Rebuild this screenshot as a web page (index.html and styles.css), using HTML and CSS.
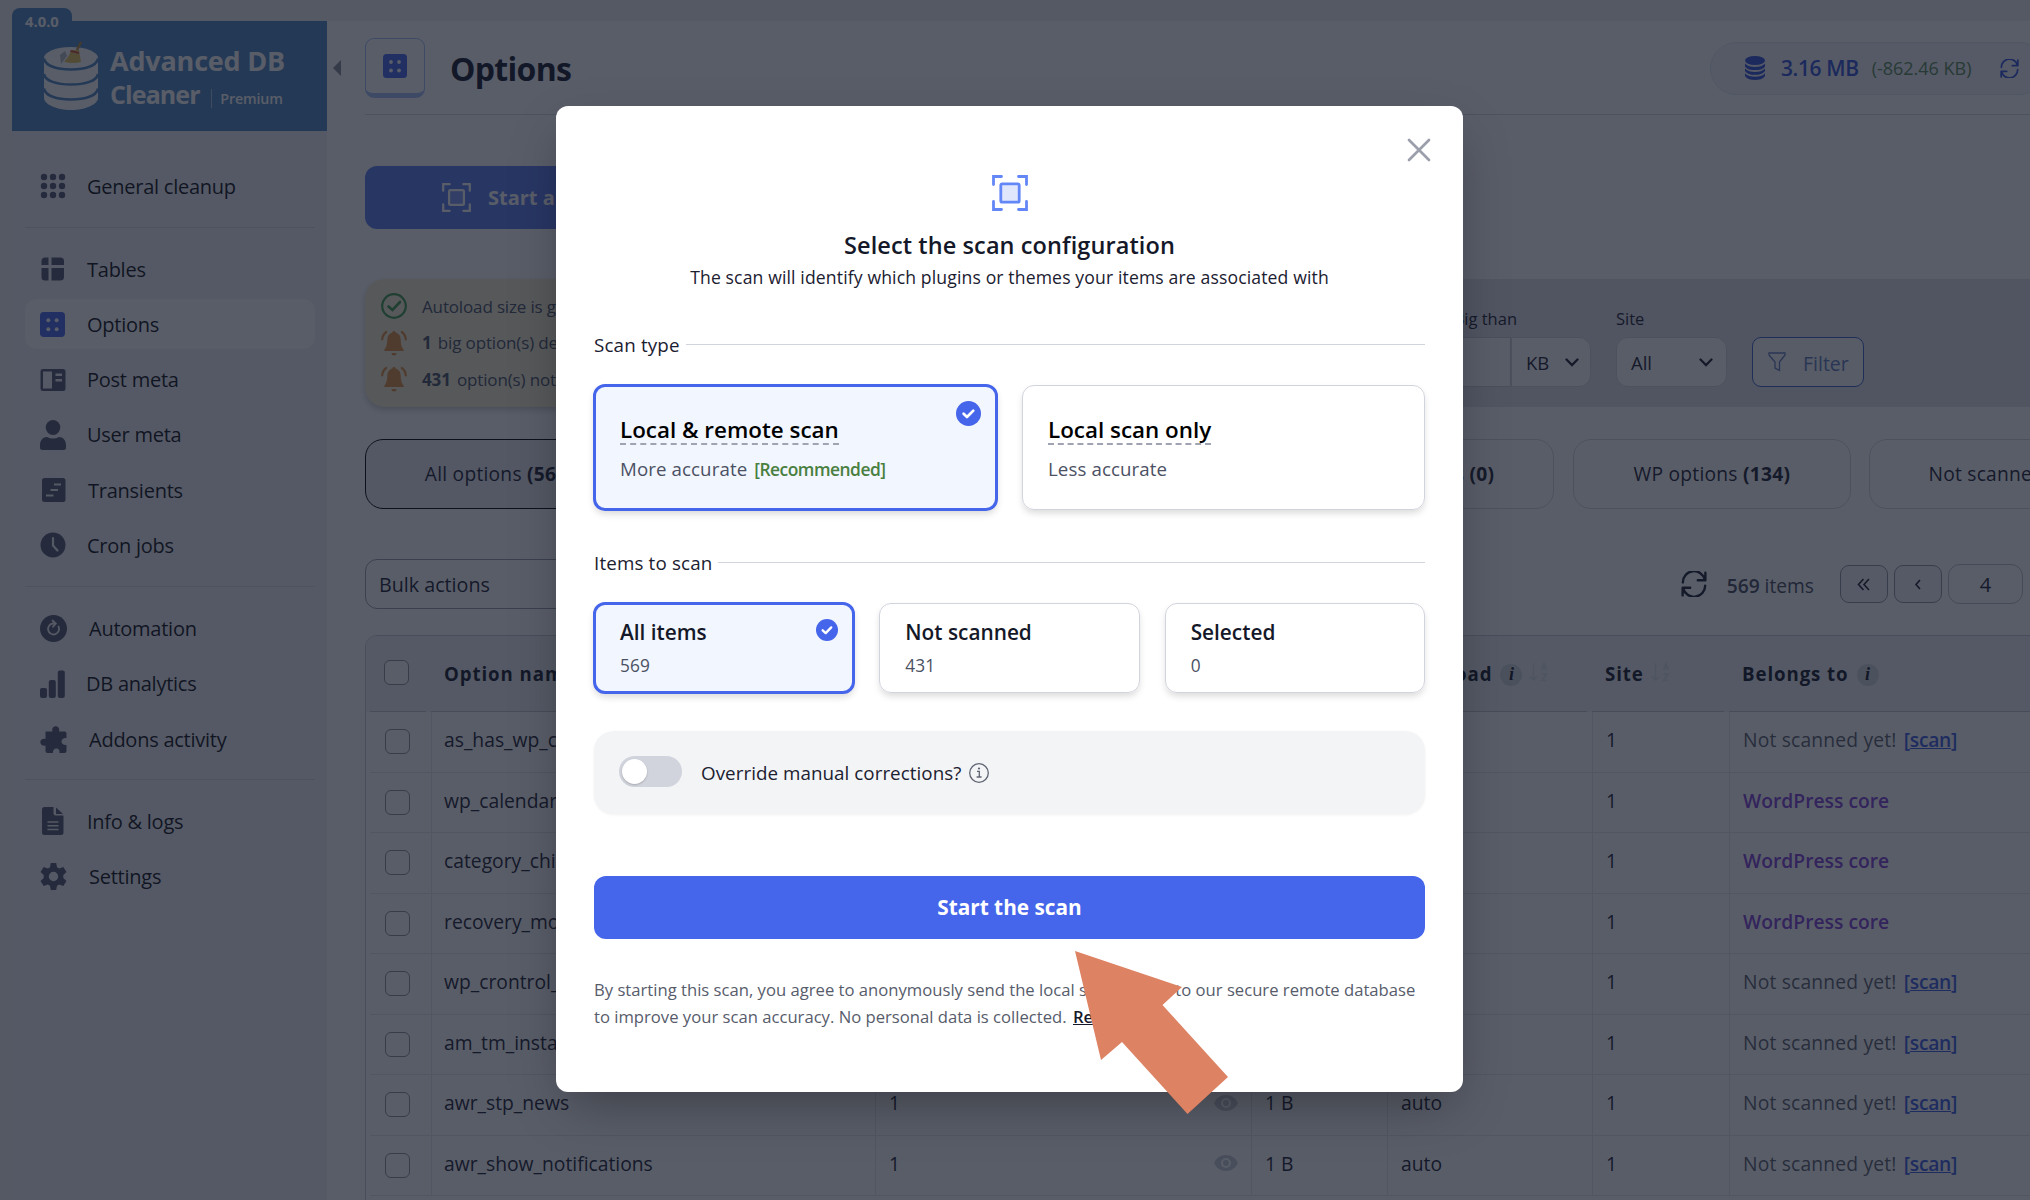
FILE: index.html
```html
<!DOCTYPE html>
<html lang="en">
<head>
	<meta charset="UTF-8">
	<title>Advanced DB Cleaner</title>
	<link rel="stylesheet" href="styles.css">
</head>
<body>
	<!-- icons used more than once -->
	<svg class="defs" width="0" height="0">
		<symbol id="i-scan" viewBox="0 0 36 36">
			<path d="M1.5 9.5V1.5H9.5M26.500 1.500H34.500V9.500M34.500 26.500V34.500H26.500M9.500 34.500H1.500V26.500" fill="none" stroke="currentColor" stroke-width="2.8" stroke-linecap="round"/>
			<rect x="8.800" y="8.800" width="18.400" height="18.400" rx="1.500" fill="currentColor" fill-opacity=".2" stroke="currentColor" stroke-width="2.800"/>
		</symbol>
		<symbol id="i-options" viewBox="0 0 24 24">
			<rect width="24" height="24" rx="3.500" fill="#4565ea"/>
			<g fill="#fff"><circle cx="8" cy="8" r="1.900"/><circle cx="16" cy="8" r="1.900"/><circle cx="8" cy="16.500" r="1.900"/><circle cx="16" cy="16.500" r="1.900"/></g>
		</symbol>
		<symbol id="i-refresh" viewBox="0 0 24 24">
			<path d="M22.500 1.500V8.500H15.500M22 8A10.300 10.300 0 0 0 1.700 10.500M1.500 22.500V15.500H8.500M2 16A10.300 10.300 0 0 0 22.300 13.500" fill="none" stroke="currentColor" stroke-width="2.200" stroke-linecap="round" stroke-linejoin="round"/>
		</symbol>
		<symbol id="i-bell" viewBox="0 0 26 26">
			<path d="M13 1c-1 0-1.700.7-1.700 1.600C8.200 3.400 6.300 6 6.300 9.500c0 5-1.200 8.200-3 10.300V21h19.400v-1.200c-1.800-2.100-3-5.300-3-10.300 0-3.500-1.900-6.100-5-6.900C14.700 1.700 14 1 13 1zM10.500 23h5a2.500 2.500 0 0 1-5 0z" fill="currentColor"/>
			<path d="M5.200 2C2.800 3.800 1.400 6.300 1.200 9.500M20.800 2c2.400 1.800 3.800 4.300 4 7.500" fill="none" stroke="currentColor" stroke-width="2.200" stroke-linecap="round"/>
		</symbol>
		<symbol id="i-chevron" viewBox="0 0 14 9"><path d="M1.500 1.500L7 7L12.500 1.500" fill="none" stroke="currentColor" stroke-width="2.300" stroke-linecap="round"/></symbol>
		<symbol id="i-check" viewBox="0 0 25 25">
			<circle cx="12.500" cy="12.500" r="12.500" fill="#4565ea"/>
			<path d="M7.600 12.800L11 16L17.300 9.600" fill="none" stroke="#fff" stroke-width="2.700" stroke-linecap="round" stroke-linejoin="round"/>
		</symbol>
		<symbol id="i-eye" viewBox="0 0 24 16">
			<path d="M12 0C6.500 0 2.200 3.200 0 8c2.200 4.800 6.500 8 12 8s9.800-3.200 12-8C21.800 3.200 17.500 0 12 0zm0 13a5 5 0 1 1 0-10 5 5 0 0 1 0 10z" fill="currentColor"/><circle cx="12" cy="8" r="3" fill="currentColor"/>
		</symbol>
		<symbol id="i-sort" viewBox="0 0 20 20">
			<path d="M4.500 1V18M1 14.500L4.500 18L8 14.500M12.500 8L15 1.500L17.500 8M13.300 6H16.700M12.500 12H17.500L12.500 18.500H17.500" fill="none" stroke="currentColor" stroke-width="1.600"/>
		</symbol>
	</svg>

	<div class="page">
		<div class="sidebar">
			<span class="version">4.0.0</span>
			<div class="logo">
				<svg width="56" height="70" viewBox="0 0 56 70">
					<path d="M1 17V57C1 63 13 69 28 69S55 63 55 57V17z" fill="#fff"/>
					<ellipse cx="28" cy="17" rx="27" ry="11" fill="#fff"/>
					<path d="M1 17.500C2 25 14 28.500 28 28.500S54 25 55 17.500M1 33C2 40 14 43.500 28 43.500S54 40 55 33M1 47.500C2 55 14 58.500 28 58.500S54 55 55 47.500" fill="none" stroke="#4e86be" stroke-width="2.600"/>
					<path d="M17 14l5-4 2 5-6 8z" fill="#b9bcc2"/>
					<path d="M38 1L34 9" stroke="#b98a3a" stroke-width="2.400"/>
					<path d="M28 9L36 9L38 21C32 23 26 22 21 20.500C25 17 27 13 28 9z" fill="#e8c55c"/>
					<path d="M27.500 10L36 12" stroke="#d05038" stroke-width="2"/>
				</svg>
				<div class="logo-text">
					<p>Advanced DB</p>
					<p class="second">Cleaner <small>Premium</small></p>
				</div>
			</div>
			<ul class="nav">
				<li>
					<svg width="26" height="26" viewBox="0 0 26 26" fill="currentColor"><circle cx="4" cy="4" r="3.200"/><circle cx="13" cy="4" r="3.200"/><circle cx="22" cy="4" r="3.200"/><circle cx="4" cy="13" r="3.200"/><circle cx="13" cy="13" r="3.200"/><circle cx="22" cy="13" r="3.200"/><circle cx="4" cy="22" r="3.200"/><circle cx="13" cy="22" r="3.200"/><circle cx="22" cy="22" r="3.200"/></svg>
					General cleanup
				</li>
				<li class="line"></li>
				<li>
					<svg width="26" height="26" viewBox="0 0 26 26" fill="currentColor"><path d="M5 1.500H8.500V9H1.500V5A3.500 3.500 0 0 1 5 1.500zM11.500 1.500H21A3.500 3.500 0 0 1 24 5V9H11.500zM1.500 12H8.500V24.500H5A3.500 3.500 0 0 1 1.500 21zM11.500 12H24V21A3.500 3.500 0 0 1 21 24.500H11.500z"/></svg>
					Tables
				</li>
				<li class="on"><svg width="25" height="25"><use href="#i-options"/></svg>Options</li>
				<li>
					<svg width="26" height="24" viewBox="0 0 26 24"><path fill="currentColor" fill-rule="evenodd" d="M3 1H23A2.500 2.500 0 0 1 25.500 3.500V20.500A2.500 2.500 0 0 1 23 23H3A2.500 2.500 0 0 1 .5 20.500V3.500A2.500 2.500 0 0 1 3 1zM3 3.500V20.500H12V3.500zM15.500 5.500V8H22V5.500zM15.500 11V13.500H22V11z"/></svg>
					Post meta
				</li>
				<li>
					<svg width="26" height="30" viewBox="0 0 26 30" fill="currentColor"><ellipse cx="13" cy="7.500" rx="7.300" ry="7.500"/><path d="M0 25.500C0 20 3 17 7 17C9 18 11 18.500 13 18.500S17 18 19 17C23 17 26 20 26 25.500V27.500Q26 30 23.500 30H2.500Q0 30 0 27.500z"/></svg>
					User meta
				</li>
				<li class="x2">
					<svg width="26" height="24" viewBox="0 0 26 24"><rect x="2" width="23.500" height="24" rx="2.500" fill="currentColor"/><path d="M14 6.500H21M10.500 12H18M6 17.500H13.500" stroke="#f0f0f1" stroke-width="2.200"/></svg>
					Transients
				</li>
				<li>
					<svg width="26" height="26" viewBox="0 0 26 26"><circle cx="13" cy="13" r="12.500" fill="currentColor"/><path d="M13 6V13.500L17.500 18.500" fill="none" stroke="#f0f0f1" stroke-width="2.200" stroke-linecap="round"/></svg>
					Cron jobs
				</li>
				<li class="line"></li>
				<li class="x3">
					<svg width="27" height="27" viewBox="0 0 27 27"><circle cx="13.500" cy="13.500" r="13.500" fill="currentColor"/><path d="M18.500 11.500A5.500 5.500 0 1 1 13 8.500H15M12.500 5.500L15.800 8.500L13 11.700" fill="none" stroke="#f0f0f1" stroke-width="1.800" stroke-linecap="round"/></svg>
					Automation
				</li>
				<li class="x1">
					<svg width="26" height="30" viewBox="0 0 26 30" fill="currentColor"><rect y="19" width="7" height="10" rx="2"/><rect x="8.800" y="11" width="7" height="18" rx="2"/><rect x="17.800" y="1.500" width="7" height="27.500" rx="2"/></svg>
					DB analytics
				</li>
				<li class="x3">
					<svg width="27" height="27" viewBox="0 0 27 27"><path fill="currentColor" d="M5.500 5.500H12.500C11.500 2.500 13.500.3 15.700.3S20 2.500 19 5.500H24.500Q26.500 5.500 26.500 7.500V12C24 11.500 21.500 13 21.500 15.500S24 19.500 26.500 19V25Q26.500 27 24.500 27H19.500C20 24.500 18.500 22.500 16.500 22.500S12.500 24.500 13 27H7.500Q5.500 27 5.500 25V19.500C3 20.500 .3 18.500.3 16S3 12 5.500 13z"/></svg>
					Addons activity
				</li>
				<li class="line last"></li>
				<li>
					<svg width="26" height="28" viewBox="0 0 26 28"><path fill="currentColor" d="M4.500 0H13.500V6.500A2 2 0 0 0 15.500 8.500H23.500V25.500A2.500 2.500 0 0 1 21 28H4.500A2.500 2.500 0 0 1 2 25.500V2.500A2.500 2.500 0 0 1 4.500 0zM16 .5L23 7H16z"/><path d="M7.500 15H18.500M7.500 18.700H18.500M7.500 22.400H18.500" stroke="#f0f0f1" stroke-width="1.500"/></svg>
					Info &amp; logs
				</li>
				<li class="x3">
					<svg width="27" height="27" viewBox="0 0 27 27"><path fill="currentColor" fill-rule="evenodd" d="M10.800 0H16.200L17 4.200L19.200 5.400L23.300 4L26.500 9L23.300 12V15L26.500 18L23.300 23L19.200 21.600L17 22.800L16.200 27H10.800L10 22.800L7.800 21.600L3.700 23L.5 18L3.700 15V12L.5 9L3.700 4L7.800 5.400L10 4.200zM13.500 8.800A4.700 4.700 0 1 0 13.500 18.200A4.700 4.700 0 1 0 13.500 8.800z"/></svg>
					Settings
				</li>
			</ul>
		</div>

		<div class="main">
			<div class="head">
				<span class="collapse"></span>
				<div class="head-icon"><svg width="24" height="24"><use href="#i-options"/></svg></div>
				<h1>Options</h1>
				<div class="size">
					<svg width="20" height="24" viewBox="0 0 20 24" fill="currentColor"><ellipse cx="10" cy="4.500" rx="10" ry="4.500"/><path d="M0 7.500C2 10 6 11 10 11S18 10 20 7.500V10.500C18 13.500 14 14 10 14S2 13.500 0 10.500zM0 12.500C2 15 6 16 10 16S18 15 20 12.500V15C18 18 14 18.800 10 18.800S2 18 0 15zM0 17.300C2 20 6 20.800 10 20.800S18 20 20 17.300V20C18 23 14 24 10 24S2 23 0 20z"/></svg>
					<b>3.16 MB</b>
					<span>(-862.46 KB)</span>
					<svg class="size-refresh" width="19" height="19"><use href="#i-refresh"/></svg>
				</div>
			</div>

			<div class="start"><svg width="29" height="29"><use href="#i-scan"/></svg>Start a new scan</div>

			<div class="info-row">
				<div class="notice">
					<p><svg class="ok" width="26" height="26" viewBox="0 0 26 26" fill="none" stroke="currentColor"><circle cx="13" cy="13" r="11.800" stroke-width="2.200"/><path d="M7.500 13.500L11.500 17L19 9" stroke-width="2.600" stroke-linecap="round"/></svg>Autoload size is good</p>
					<p><svg width="26" height="26"><use href="#i-bell"/></svg><span><b>1</b> big option(s) detected</span></p>
					<p><svg width="26" height="26"><use href="#i-bell"/></svg><span><b>431</b> option(s) not scanned</span></p>
				</div>
				<div class="filters">
					<div class="field big">
						<label>Big than</label>
						<div class="group"><span class="input"></span><span class="select kb">KB<svg width="14" height="9"><use href="#i-chevron"/></svg></span></div>
					</div>
					<div class="field">
						<label>Site</label>
						<span class="select all">All<svg width="14" height="9"><use href="#i-chevron"/></svg></span>
					</div>
					<div class="filter-btn"><svg width="18" height="20" viewBox="0 0 18 20"><path d="M1 1H17V3L11.500 10V18.500L7 16V10L1 3z" fill="none" stroke="currentColor" stroke-width="1.300"/></svg><span>Filter</span></div>
				</div>
			</div>

			<div class="tabs">
				<div class="tab on">All options <b>(569)</b></div>
				<div class="tab"></div>
				<div class="tab"></div>
				<div class="tab end">Orphans <b>(0)</b></div>
				<div class="tab">WP options <b>(134)</b></div>
				<div class="tab last">Not scanned <b>(431)</b></div>
			</div>

			<div class="toolbar">
				<div class="bulk">Bulk actions</div>
				<div class="pager">
					<svg width="26" height="26"><use href="#i-refresh"/></svg>
					<span class="count"><b>569</b> items</span>
					<span class="pbtn"><svg width="14" height="13" viewBox="0 0 14 13"><path d="M6.500 1L1.500 6.500L6.500 12M12 1L7 6.500L12 12" fill="none" stroke="currentColor" stroke-width="1.600"/></svg></span>
					<span class="pbtn"><svg width="8" height="11" viewBox="0 0 8 11"><path d="M6 1L2 5.500L6 10" fill="none" stroke="currentColor" stroke-width="1.600"/></svg></span>
					<span class="pnum">4</span>
				</div>
			</div>

			<div class="table-box">
				<table>
					<colgroup><col class="c1"><col class="c2"><col class="c3"><col class="c4"><col class="c5"><col class="c6"><col></colgroup>
					<thead>
						<tr>
							<th><i class="cb"></i></th>
							<th>Option name</th>
							<th>Value</th>
							<th>Size</th>
							<th><span class="th">Autoload <em>i</em><svg width="20" height="20"><use href="#i-sort"/></svg></span></th>
							<th><span class="th">Site<svg width="20" height="20"><use href="#i-sort"/></svg></span></th>
							<th><span class="th">Belongs to <em>i</em></span></th>
						</tr>
					</thead>
					<tbody>
						<tr><td><i class="cb"></i></td><td>as_has_wp_comment_logs</td><td></td><td></td><td></td><td>1</td><td class="no">Not scanned yet! <a>[<u>scan</u>]</a></td></tr>
						<tr><td><i class="cb"></i></td><td>wp_calendar_block_has_posts</td><td></td><td></td><td></td><td>1</td><td class="core">WordPress core</td></tr>
						<tr><td><i class="cb"></i></td><td>category_children</td><td></td><td></td><td></td><td>1</td><td class="core">WordPress core</td></tr>
						<tr><td><i class="cb"></i></td><td>recovery_mode_email_last_sent</td><td></td><td></td><td></td><td>1</td><td class="core">WordPress core</td></tr>
						<tr><td><i class="cb"></i></td><td>wp_crontrol_paused</td><td></td><td></td><td></td><td>1</td><td class="no">Not scanned yet! <a>[<u>scan</u>]</a></td></tr>
						<tr><td><i class="cb"></i></td><td>am_tm_install_date</td><td></td><td></td><td></td><td>1</td><td class="no">Not scanned yet! <a>[<u>scan</u>]</a></td></tr>
						<tr><td><i class="cb"></i></td><td>awr_stp_news</td><td><span class="val">1<svg width="24" height="16"><use href="#i-eye"/></svg></span></td><td>1 B</td><td>auto</td><td>1</td><td class="no">Not scanned yet! <a>[<u>scan</u>]</a></td></tr>
						<tr><td><i class="cb"></i></td><td>awr_show_notifications</td><td><span class="val">1<svg width="24" height="16"><use href="#i-eye"/></svg></span></td><td>1 B</td><td>auto</td><td>1</td><td class="no">Not scanned yet! <a>[<u>scan</u>]</a></td></tr>
					</tbody>
				</table>
			</div>
		</div>
	</div>

	<div class="overlay"></div>

	<div class="modal">
		<svg class="close" width="24" height="24" viewBox="0 0 24 24"><path d="M2 2L22 22M22 2L2 22" stroke="#9b9fac" stroke-width="2.700" stroke-linecap="round"/></svg>
		<svg class="modal-icon" width="36" height="36"><use href="#i-scan"/></svg>
		<h2>Select the scan configuration</h2>
		<p class="sub">The scan will identify which plugins or themes your items are associated with</p>

		<div class="legend">Scan type</div>
		<div class="cards two">
			<div class="card on">
				<h3><span>Local &amp; remote scan</span></h3>
				<p>More accurate <b>[Recommended]</b></p>
				<svg class="check" width="25" height="25"><use href="#i-check"/></svg>
			</div>
			<div class="card">
				<h3><span>Local scan only</span></h3>
				<p>Less accurate</p>
			</div>
		</div>

		<div class="legend">Items to scan</div>
		<div class="cards three">
			<div class="card on">
				<h3>All items</h3>
				<p>569</p>
				<svg class="check" width="22" height="22" viewBox="0 0 25 25"><use href="#i-check"/></svg>
			</div>
			<div class="card"><h3>Not scanned</h3><p>431</p></div>
			<div class="card"><h3>Selected</h3><p>0</p></div>
		</div>

		<div class="override">
			<span class="toggle"></span>
			<span class="override-text">Override manual corrections?</span>
			<svg width="20" height="20" viewBox="0 0 20 20"><circle cx="10" cy="10" r="9.300" fill="none" stroke="#5f6472" stroke-width="1.300"/><path d="M8 8.300H10.300V14M7.600 14H12.600" fill="none" stroke="#5f6472" stroke-width="1.300"/><circle cx="10" cy="5.500" r="1.100" fill="#5f6472"/></svg>
		</div>

		<div class="go">Start the scan</div>
		<p class="foot">By starting this scan, you agree to anonymously send the local scan results to our secure remote database<br>to improve your scan accuracy. No personal data is collected. <b>Read more</b></p>
	</div>

	<svg class="arrow" width="156" height="166" viewBox="0 0 156 166"><path d="M1 1L108 37L88.500 55L154 127L113.500 164L48 92L27 110z" fill="#dd8263"/></svg>
</body>
</html>
```

FILE: styles.css
```css
*{
	margin: 0;
	padding: 0;
	box-sizing: border-box;
}
body{
	width: 2030px;
	height: 1200px;
	overflow: hidden;
	position: relative;
	background-color: #f0f0f1;
	font-family: "Open Sans", "Noto Sans", sans-serif;
	font-size: 18.5px;
	color: #1b2030;
}
svg{
	display: block;
	flex-shrink: 0;
}
.defs{
	position: absolute;
}
ul{
	list-style: none;
}
.page{
	display: flex;
	width: 2030px;
	height: 1200px;
	padding: 21px 0 0 12px;
	overflow: hidden;
}

/* sidebar */
.sidebar{
	width: 315px;
	flex-shrink: 0;
	position: relative;
	background-color: #f2f2f4;
}
.version{
	position: absolute;
	left: 0;
	top: -13px;
	width: 60px;
	height: 26px;
	padding-left: 13px;
	border-radius: 8px 8px 0 0;
	background-color: #4e86be;
	color: #fff;
	font-size: 14.8px;
	font-weight: 700;
	line-height: 26px;
}
.logo{
	display: flex;
	height: 110px;
	padding: 20px 0 0 31px;
	background-color: #4e86be;
}
.logo-text{
	margin: 3px 0 0 11px;
	color: #fff;
	font-size: 27px;
	font-weight: 700;
	line-height: 34px;
	letter-spacing: -.2px;
	white-space: nowrap;
}
.logo-text .second{
	margin-top: -1px;
	font-size: 25px;
	letter-spacing: -.9px;
}
.logo-text small{
	margin-left: 6px;
	padding-left: 8px;
	border-left: 1px solid #a9c6e2;
	font-size: 14.3px;
	font-weight: 600;
	letter-spacing: -.15px;
}
.nav{
	padding: 30px 12px 0 13px;
}
.nav li{
	display: flex;
	align-items: center;
	gap: 21px;
	height: 50px;
	margin-bottom: 5.3px;
	padding-left: 15px;
	font-size: 20px;
	letter-spacing: -.25px;
	color: #0e1016;
	border-radius: 12px;
}
.nav li svg{
	color: #50566e;
}
.nav .on{
	background-color: #fff;
}
.nav .on svg{
	margin-right: 1px;
}
.nav .x1{
	gap: 20px;
}
.nav .x2{
	gap: 22px;
}
.nav .x3{
	gap: 22px;
}
.nav .line{
	height: 1px;
	margin: 16px 0 16px;
	padding: 0;
	background-color: #d9dae0;
	border-radius: 0;
}
.nav .line.last{
	margin: 15px 0 16px;
}

/* page header, the content is wider than the window */
.main{
	width: 1757px;
	flex-shrink: 0;
	padding: 0 38px;
	background-color: #fff;
}
.head{
	position: relative;
	display: flex;
	align-items: center;
	height: 94px;
	border-bottom: 1px solid #d8dae0;
}
.collapse{
	position: absolute;
	left: -32px;
	top: 39px;
	border: 8px solid transparent;
	border-left: 0;
	border-right-color: #8b8e9b;
}
.head-icon{
	display: flex;
	justify-content: center;
	width: 60px;
	height: 60px;
	margin-top: 1px;
	padding-top: 15px;
	border: 1px solid #a5c0f5;
	border-bottom-width: 5px;
	border-radius: 9px;
}
h1{
	margin: 2px 0 0 25px;
	font-size: 32px;
	font-weight: 700;
	letter-spacing: -.7px;
	color: #141828;
}
.size{
	display: flex;
	align-items: center;
	width: 336px;
	height: 53px;
	margin: 1px 0 0 auto;
	padding-left: 34px;
	border: 1px solid #e0e6f0;
	border-radius: 27px;
	background-color: #f1f5f9;
	color: #3553d8;
}
.size b{
	margin: 0 13px 0 16px;
	font-size: 21px;
	font-weight: 600;
	letter-spacing: -.4px;
}
.size span{
	color: #5a8a55;
	font-size: 18px;
	letter-spacing: 0;
}
.size-refresh{
	margin-left: 28px;
}
.start{
	display: flex;
	align-items: center;
	gap: 17px;
	width: 366px;
	height: 63px;
	margin-top: 51px;
	padding-left: 77px;
	border-radius: 12px;
	background-color: #5c7cf0;
	color: #fff;
	font-size: 20px;
	font-weight: 700;
}

/* notices and filters */
.info-row{
	display: flex;
	gap: 30px;
	height: 128px;
	margin-top: 50px;
}
.notice{
	width: 400px;
	padding: 9px 0 0 16px;
	border-radius: 20px;
	background-color: #f8efd0;
	box-shadow: 0 3px 6px rgba(0,0,0,.2);
	color: #475063;
	font-size: 17px;
	letter-spacing: -.15px;
}
.notice p{
	display: flex;
	align-items: center;
	gap: 15px;
	height: 36.6px;
}
.notice b{
	margin-right: 2px;
}
.notice svg{
	color: #e2903f;
}
.notice .ok{
	color: #3f9a4e;
}
.filters{
	display: flex;
	flex: 1;
	justify-content: flex-end;
	gap: 25px;
	padding: 28px 182px 0 0;
	background-color: #e4e5ea;
}
.field label{
	display: block;
	height: 30px;
	font-size: 16.5px;
	line-height: 24px;
}
.field.big label{
	width: 65px;
	text-align: right;
	white-space: nowrap;
}
.group{
	display: flex;
}
.input{
	width: 59px;
	height: 50px;
	border: 1px solid #cfd1d8;
	background-color: #fff;
}
.select{
	display: flex;
	align-items: center;
	justify-content: space-between;
	height: 50px;
	padding: 0 13px 0 14px;
	border: 1px solid #d5d7dd;
	border-radius: 12px;
	background-color: #fff;
}
.kb{
	width: 80px;
	padding-right: 11px;
	border-radius: 0 12px 12px 0;
}
.all{
	width: 111px;
}
.filter-btn{
	display: flex;
	align-items: center;
	gap: 17px;
	width: 112px;
	height: 50px;
	margin-top: 30px;
	padding-left: 15px;
	border: 1px solid #3a63c8;
	border-radius: 9px;
	background-color: #f8fafc;
	color: #5f7cba;
	font-size: 19.5px;
}
.filter-btn span{
	margin-top: 2px;
}

/* tabs */
.tabs{
	display: grid;
	grid-template-columns: 278px 285px 285px 285.500px 278px 278px;
	gap: 18.600px;
	margin-top: 32px;
}
.tab{
	height: 70px;
	border: 1px solid #d5d7dd;
	border-radius: 18px;
	font-size: 19.2px;
	letter-spacing: .25px;
	line-height: 67px;
	text-align: center;
	white-space: nowrap;
}
.tab.on{
	padding-right: 9px;
	border-color: #000;
	background-color: #eceef1;
}
.tab.end{
	padding-right: 59px;
	text-align: right;
}
.tab.last{
	padding-left: 58px;
	text-align: left;
}

/* bulk actions and pager */
.toolbar{
	display: flex;
	justify-content: space-between;
	height: 50px;
	margin-top: 50px;
}
.bulk{
	width: 260px;
	padding-left: 13px;
	border: 1px solid #9a9eab;
	border-radius: 12px;
	line-height: 49px;
	font-size: 19.7px;
}
.pager{
	display: flex;
	align-items: center;
	padding-right: 23px;
}
.count{
	margin: 2px 26px 0 20px;
	color: #454b5a;
	font-size: 19.2px;
}
.count b{
	font-weight: 600;
}
.pbtn,
.pnum{
	display: flex;
	align-items: center;
	justify-content: center;
	width: 48px;
	height: 38px;
	margin-right: 6px;
	border: 1px solid #8f93a0;
	border-radius: 9px;
	background-color: #f5f6f8;
}
.pnum{
	width: 75px;
	height: 40px;
	margin: 0;
	padding-top: 1px;
	border-color: #bcbfc8;
	border-radius: 12px;
	background-color: #fff;
	font-size: 20px;
}

/* table */
.table-box{
	height: 620px;
	margin-top: 26px;
	padding-left: 4px;
	border: 1px solid #c8cad2;
	border-radius: 12px 0 0 0;
	overflow: hidden;
}
table{
	width: 100%;
	table-layout: fixed;
	border-collapse: separate;
	border-spacing: 0;
}
.c1{ width: 61px; }
.c2{ width: 444px; }
.c3{ width: 376px; }
.c4{ width: 136px; }
.c5{ width: 205px; }
.c6{ width: 137px; }
th{
	height: 76px;
	padding-left: 13px;
	border-bottom: 1px solid #c3c6ce;
	background-color: #eef2f6;
	box-shadow: -5px 0 0 #eef2f6;
	text-align: left;
	font-size: 18.7px;
	font-weight: 700;
	letter-spacing: .9px;
	white-space: nowrap;
	color: #141828;
}
td{
	height: 60.5px;
	padding: 0 0 4px 13px;
	border-bottom: 1px solid #e6e7eb;
	border-left: 1px solid #e6e7eb;
	font-size: 19.3px;
	white-space: nowrap;
}
td:nth-child(2){
	padding-left: 12px;
}
td:first-child{
	border-left: 0;
}
th:first-child{
	padding: 0 0 0 14px;
}
td:first-child{
	padding: 0 0 0 15px;
}
.cb{
	display: block;
	width: 25px;
	height: 25px;
	border: 1px solid #8c8f94;
	border-radius: 6px;
	background-color: #fff;
}
th .cb{
	margin-bottom: 3px;
}
.th{
	display: flex;
	align-items: center;
}
.th em{
	width: 22px;
	height: 22px;
	margin: 2px 0 0 8px;
	border-radius: 50%;
	background-color: #d3d5dd;
	font: italic 700 18px/21px "Liberation Serif", serif;
	letter-spacing: 0;
	text-align: center;
}
.th svg{
	margin: -4px 0 0 7px;
	color: #dce0e6;
}
.val{
	display: flex;
	align-items: center;
	justify-content: space-between;
	padding-right: 13px;
}
.val svg{
	color: #c9ccd6;
}
.no{
	color: #5b5f6b;
	letter-spacing: .17px;
}
.no a{
	margin-left: 2px;
	color: #3b5be0;
	font-weight: 600;
	letter-spacing: -.3px;
}
.core{
	color: #8040d8;
	font-weight: 600;
}

/* modal */
.overlay{
	position: absolute;
	top: 0;
	left: 0;
	width: 2030px;
	height: 1200px;
	background-color: rgba(19,24,40,.7);
}
.modal{
	position: absolute;
	left: 556px;
	top: 106px;
	width: 907px;
	height: 986px;
	padding: 69px 38px 0;
	border-radius: 12px;
	background-color: #fff;
	box-shadow: 0 20px 50px -12px rgba(0,0,0,.35);
}
.close{
	position: absolute;
	right: 32px;
	top: 32px;
}
.modal-icon{
	margin: 0 auto;
	color: #6487f7;
}
h2{
	margin-top: 17px;
	font-size: 23.5px;
	font-weight: 600;
	line-height: 34px;
	letter-spacing: .1px;
	text-align: center;
	color: #141828;
}
.sub{
	height: 69px;
	font-size: 17.6px;
	line-height: 31px;
	letter-spacing: .13px;
	text-align: center;
}
.legend{
	display: flex;
	align-items: center;
	gap: 6px;
	height: 26px;
	padding-top: 2px;
	font-size: 18.8px;
	letter-spacing: .15px;
}
.legend:after{
	content: "";
	flex: 1;
	height: 1px;
	margin-bottom: 2px;
	background-color: #d1d4dc;
}
.cards{
	display: grid;
	gap: 25px;
}
.two{
	grid-template-columns: 1fr 1fr;
	margin: 28px 0 40px;
}
.three{
	grid-template-columns: 1fr 1fr 1fr;
	margin: 28px 0 38px;
}
.card{
	position: relative;
	height: 125px;
	margin-bottom: -1px;
	padding: 29px 0 0 25px;
	border: 1px solid #d1d4dc;
	border-radius: 12px;
	box-shadow: 0 4px 7px -1px rgba(0,0,0,.15);
}
.card.on{
	margin: -1px -1px -2px;
	height: 127px;
	padding: 28px 0 0 24px;
	border: 3px solid #4565ea;
	background-color: #f2f6ff;
}
.card h3{
	height: 39px;
	font-size: 22.4px;
	font-weight: 600;
	line-height: 30px;
	color: #000;
}
.card h3 span{
	display: inline-block;
	height: 30px;
	border-bottom: 2px dashed #a0a4b2;
}
.card p{
	font-size: 18.7px;
	line-height: 30px;
	letter-spacing: .1px;
	color: #4b5163;
}
.card p b{
	margin-left: 2px;
	font-size: 17.4px;
	font-weight: 600;
	letter-spacing: -.5px;
	color: #4a803f;
}
.three .card{
	height: 90px;
	margin-bottom: 0;
	padding-top: 14px;
}
.three .card.on{
	height: 92px;
	margin-bottom: -1px;
	padding-top: 13px;
}
.three .card h3{
	height: 33px;
	font-size: 20.8px;
	line-height: 28px;
	color: #141828;
}
.three .card p{
	font-size: 17.3px;
}
.check{
	position: absolute;
	right: 14px;
	top: 14px;
}
.override{
	display: flex;
	align-items: center;
	height: 83px;
	padding: 0 0 2px 25px;
	border-radius: 20px;
	background-color: #f3f4f6;
	box-shadow: 0 1px 3px rgba(0,0,0,.06);
	font-size: 18.8px;
	letter-spacing: .05px;
}
.override-text{
	margin-top: 2px;
}
.override svg{
	margin: 3px 0 0 8px;
}
.toggle{
	width: 63px;
	height: 31px;
	margin-right: 19px;
	padding: 3px;
	border-radius: 16px;
	background-color: #d1d4dc;
}
.toggle:after{
	content: "";
	display: block;
	width: 25px;
	height: 25px;
	border-radius: 50%;
	background-color: #fff;
	box-shadow: 0 1px 2px rgba(0,0,0,.2);
}
.go{
	height: 63px;
	margin-top: 62px;
	border-radius: 12px;
	background-color: #4565ea;
	color: #fff;
	font-size: 20.8px;
	font-weight: 700;
	line-height: 62px;
	text-align: center;
}
.foot{
	margin-top: 37px;
	font-size: 16.65px;
	line-height: 27px;
	white-space: nowrap;
	color: #575c6b;
}
.foot b{
	margin-left: 2px;
	font-weight: 600;
	color: #141828;
	text-decoration: underline;
}
.arrow{
	position: absolute;
	left: 1074px;
	top: 950px;
}
```
